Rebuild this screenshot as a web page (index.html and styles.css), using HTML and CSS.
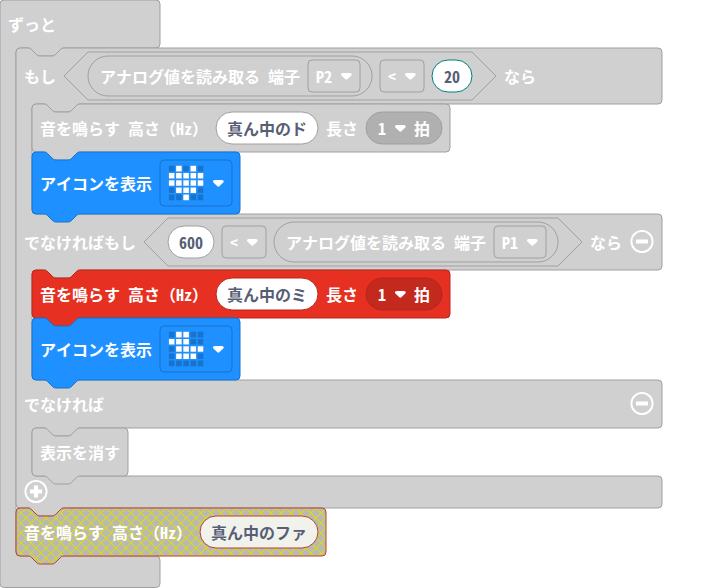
FILE: index.html
```html
<!DOCTYPE html>
<html lang="ja">
<head>
<meta charset="utf-8">
<title>ブロック</title>
<link rel="stylesheet" href="styles.css">
</head>
<body>
<svg class="defs" aria-hidden="true">
  <defs>
    <symbol id="arrow" viewBox="0 0 12.71 8.79">
      <path d="M6.36,7.79a1.43,1.43,0,0,1-1-.42L1.42,3.45a1.44,1.44,0,0,1,0-2c.56-.56,9.31-.56,9.87,0a1.44,1.44,0,0,1,0,2L7.37,7.37A1.43,1.43,0,0,1,6.36,7.79Z"/>
    </symbol>
    <symbol id="minus" viewBox="0 0 24 24">
      <circle class="ring" cx="12" cy="11.5" r="10.6"/>
      <rect x="6" y="9.4" width="12" height="4.2" rx=".4"/>
    </symbol>
    <symbol id="plus" viewBox="0 0 24 24">
      <circle class="ring" cx="12" cy="11.5" r="10.6"/>
      <path d="M9.9 5.4h4.2v4h4v4.2h-4v4h-4.2v-4h-4v-4.2h4z"/>
    </symbol>
    <pattern id="hatch" patternUnits="userSpaceOnUse" width="10" height="10">
      <rect class="hatch-base" width="10" height="10"/>
      <path class="hatch-line" d="M0 0L10 10M10 0L0 10"/>
    </pattern>
  </defs>
</svg>

<main class="block gray forever">
  <svg class="shape"><path d="M0 4a4 4 0 0 1 4-4H156a4 4 0 0 1 4 4V44a4 4 0 0 1-4 4H64c-2 0-3 1-4 2l-4 4c-1 1-2 2-4 2H40c-2 0-3-1-4-2l-4-4c-1-1-2-2-4-2H20a4 4 0 0 0-4 4V552a4 4 0 0 0 4 4H156a4 4 0 0 1 4 4V583.5a4 4 0 0 1-4 4H4a4 4 0 0 1-4-4Z"/></svg>
  <div class="row head">ずっと</div>
  <div class="body">

    <section class="block gray if">
      <svg class="shape"><path d="M0 4a4 4 0 0 1 4-4H12c2 0 3 1 4 2l4 4c1 1 2 2 4 2H36c2 0 3-1 4-2l4-4c1-1 2-2 4-2H642a4 4 0 0 1 4 4V52a4 4 0 0 1-4 4H64c-2 0-3 1-4 2l-4 4c-1 1-2 2-4 2H40c-2 0-3-1-4-2l-4-4c-1-1-2-2-4-2H20a4 4 0 0 0-4 4V162a4 4 0 0 0 4 4H642a4 4 0 0 1 4 4V218a4 4 0 0 1-4 4H64c-2 0-3 1-4 2l-4 4c-1 1-2 2-4 2H40c-2 0-3-1-4-2l-4-4c-1-1-2-2-4-2H20a4 4 0 0 0-4 4V328a4 4 0 0 0 4 4H642a4 4 0 0 1 4 4V376a4 4 0 0 1-4 4H64c-2 0-3 1-4 2l-4 4c-1 1-2 2-4 2H40c-2 0-3-1-4-2l-4-4c-1-1-2-2-4-2H20a4 4 0 0 0-4 4V424a4 4 0 0 0 4 4H642a4 4 0 0 1 4 4V456a4 4 0 0 1-4 4H48c-2 0-3 1-4 2l-4 4c-1 1-2 2-4 2H24c-2 0-3-1-4-2l-4-4c-1-1-2-2-4-2H4a4 4 0 0 1-4-4Z"/></svg>

      <div class="row branch">
        <span>もし</span>
        <div class="value hexagon">
          <svg class="shape"><path d="M24 0H408L432 24L408 48H24L0 24Z"/></svg>
          <div class="value reporter">
            <svg class="shape"><rect width="100%" height="100%" rx="20"/></svg>
            <span>アナログ値を読み取る 端子</span>
            <div class="value select"><svg class="shape"><rect width="100%" height="100%" rx="4"/></svg><span>P2</span><svg class="arrow"><use href="#arrow"/></svg></div>
          </div>
          <div class="value select"><svg class="shape"><rect width="100%" height="100%" rx="4"/></svg><span>&lt;</span><svg class="arrow"><use href="#arrow"/></svg></div>
          <div class="value input number"><svg class="shape"><rect width="100%" height="100%" rx="16"/></svg><span>20</span></div>
        </div>
        <span>なら</span>
      </div>

      <div class="body">
        <div class="block gray row tone">
          <svg class="shape"><path d="M0 4a4 4 0 0 1 4-4H12c2 0 3 1 4 2l4 4c1 1 2 2 4 2H36c2 0 3-1 4-2l4-4c1-1 2-2 4-2H414a4 4 0 0 1 4 4V44a4 4 0 0 1-4 4H48c-2 0-3 1-4 2l-4 4c-1 1-2 2-4 2H24c-2 0-3-1-4-2l-4-4c-1-1-2-2-4-2H4a4 4 0 0 1-4-4Z"/></svg>
          <span>音を鳴らす 高さ（Hz）</span>
          <div class="value input"><svg class="shape"><rect width="100%" height="100%" rx="16"/></svg><span>真ん中のド</span></div>
          <span>長さ</span>
          <div class="value beat"><svg class="shape"><rect width="100%" height="100%" rx="16"/></svg><span>1</span><svg class="arrow"><use href="#arrow"/></svg><span>拍</span></div>
        </div>
        <div class="block blue row icon">
          <svg class="shape"><path d="M0 4a4 4 0 0 1 4-4H12c2 0 3 1 4 2l4 4c1 1 2 2 4 2H36c2 0 3-1 4-2l4-4c1-1 2-2 4-2H204a4 4 0 0 1 4 4V58a4 4 0 0 1-4 4H48c-2 0-3 1-4 2l-4 4c-1 1-2 2-4 2H24c-2 0-3-1-4-2l-4-4c-1-1-2-2-4-2H4a4 4 0 0 1-4-4Z"/></svg>
          <span>アイコンを表示</span>
          <div class="value picture">
            <svg class="shape"><rect width="100%" height="100%" rx="4"/></svg>
            <svg class="leds" viewBox="0 0 36 36">
              <path class="off" d="M.9 3.6h34.4M.9 10.8h34.4M.9 18h34.4M.9 25.2h34.4M.9 32.4h34.4"/>
              <path class="on" d="M8.1 3.6h5.6M22.5 3.6h5.6M.9 10.8h34.4M.9 18h34.4M8.1 25.2h20M15.3 32.4h5.6"/>
            </svg>
            <svg class="arrow"><use href="#arrow"/></svg>
          </div>
        </div>
      </div>

      <div class="row branch">
        <span>でなければもし</span>
        <div class="value hexagon">
          <svg class="shape"><path d="M24 0H414L438 24L414 48H24L0 24Z"/></svg>
          <div class="value input"><svg class="shape"><rect width="100%" height="100%" rx="16"/></svg><span>600</span></div>
          <div class="value select"><svg class="shape"><rect width="100%" height="100%" rx="4"/></svg><span>&lt;</span><svg class="arrow"><use href="#arrow"/></svg></div>
          <div class="value reporter">
            <svg class="shape"><rect width="100%" height="100%" rx="20"/></svg>
            <span>アナログ値を読み取る 端子</span>
            <div class="value select"><svg class="shape"><rect width="100%" height="100%" rx="4"/></svg><span>P1</span><svg class="arrow"><use href="#arrow"/></svg></div>
          </div>
        </div>
        <span>なら</span>
        <svg class="button"><use href="#minus"/></svg>
      </div>

      <div class="body">
        <div class="block red row tone">
          <svg class="shape"><path d="M0 4a4 4 0 0 1 4-4H12c2 0 3 1 4 2l4 4c1 1 2 2 4 2H36c2 0 3-1 4-2l4-4c1-1 2-2 4-2H414a4 4 0 0 1 4 4V44a4 4 0 0 1-4 4H48c-2 0-3 1-4 2l-4 4c-1 1-2 2-4 2H24c-2 0-3-1-4-2l-4-4c-1-1-2-2-4-2H4a4 4 0 0 1-4-4Z"/></svg>
          <span>音を鳴らす 高さ（Hz）</span>
          <div class="value input"><svg class="shape"><rect width="100%" height="100%" rx="16"/></svg><span>真ん中のミ</span></div>
          <span>長さ</span>
          <div class="value beat"><svg class="shape"><rect width="100%" height="100%" rx="16"/></svg><span>1</span><svg class="arrow"><use href="#arrow"/></svg><span>拍</span></div>
        </div>
        <div class="block blue row icon">
          <svg class="shape"><path d="M0 4a4 4 0 0 1 4-4H12c2 0 3 1 4 2l4 4c1 1 2 2 4 2H36c2 0 3-1 4-2l4-4c1-1 2-2 4-2H204a4 4 0 0 1 4 4V58a4 4 0 0 1-4 4H48c-2 0-3 1-4 2l-4 4c-1 1-2 2-4 2H24c-2 0-3-1-4-2l-4-4c-1-1-2-2-4-2H4a4 4 0 0 1-4-4Z"/></svg>
          <span>アイコンを表示</span>
          <div class="value picture">
            <svg class="shape"><rect width="100%" height="100%" rx="4"/></svg>
            <svg class="leds" viewBox="0 0 36 36">
              <path class="off" d="M.9 3.6h34.4M.9 10.8h34.4M.9 18h34.4M.9 25.2h34.4M.9 32.4h34.4"/>
              <path class="on" d="M8.1 3.6h12.8M.9 10.8h20M8.1 18h27.2M8.1 25.2h20"/>
            </svg>
            <svg class="arrow"><use href="#arrow"/></svg>
          </div>
        </div>
      </div>

      <div class="row else">
        <span>でなければ</span>
        <svg class="button"><use href="#minus"/></svg>
      </div>

      <div class="body">
        <div class="block gray row clear">
          <svg class="shape"><path d="M0 4a4 4 0 0 1 4-4H12c2 0 3 1 4 2l4 4c1 1 2 2 4 2H36c2 0 3-1 4-2l4-4c1-1 2-2 4-2H92a4 4 0 0 1 4 4V44a4 4 0 0 1-4 4H48c-2 0-3 1-4 2l-4 4c-1 1-2 2-4 2H24c-2 0-3-1-4-2l-4-4c-1-1-2-2-4-2H4a4 4 0 0 1-4-4Z"/></svg>
          <span>表示を消す</span>
        </div>
      </div>
      <div class="row foot"><svg class="button"><use href="#plus"/></svg></div>
    </section>

    <div class="block disabled row ring-tone">
      <svg class="shape"><path d="M0 4a4 4 0 0 1 4-4H12c2 0 3 1 4 2l4 4c1 1 2 2 4 2H36c2 0 3-1 4-2l4-4c1-1 2-2 4-2H306a4 4 0 0 1 4 4V44a4 4 0 0 1-4 4H48c-2 0-3 1-4 2l-4 4c-1 1-2 2-4 2H24c-2 0-3-1-4-2l-4-4c-1-1-2-2-4-2H4a4 4 0 0 1-4-4Z"/></svg>
      <span>音を鳴らす 高さ（Hz）</span>
      <div class="value input"><svg class="shape"><rect width="100%" height="100%" rx="16"/></svg><span>真ん中のファ</span></div>
    </div>
  </div>
</main>
</body>
</html>
```
FILE: styles.css
```css
* { box-sizing: border-box; }

html, body {
  margin: 0;
  background: #fff;
  overflow: hidden;
}

body {
  height: 588px;
  color: #fff;
  font: bold 16px/24px "Noto Sans Mono CJK JP", "Noto Sans CJK JP", monospace;
  white-space: nowrap;
}

.defs {
  position: absolute;
  width: 0;
  height: 0;
}

.block {
  --fill: #d0d0d0;
  --line: #a0a0a0;
  --arg: #b0b0b0;
  position: relative;
  z-index: 0;
}

.blue { --fill: #1e90ff; --line: #1873cc; }
.red { --fill: #e63022; --line: #b8261b; --arg: #c3291d; }
.disabled { --fill: url(#hatch); --line: #b8402f; }

.shape {
  position: absolute;
  inset: 0;
  z-index: -1;
  width: 100%;
  height: 100%;
  overflow: visible;
  fill: var(--fill);
  stroke: var(--line);
  stroke-width: 1px;
}

.hatch-base { fill: #b8b8b8; }
.hatch-line { stroke: #dada1c; stroke-width: 1.1px; fill: none; }

.row {
  display: flex;
  align-items: center;
  gap: 8px;
  padding: 0 8px;
}

.body { padding-left: 16px; }

.forever { width: 160px; height: 588px; }
.head { height: 48px; }
.if { width: 646px; }
.branch { height: 56px; }
.else { height: 48px; }
.foot { height: 32px; }
.tone { width: 418px; height: 48px; }
.icon { width: 208px; height: 62px; }
.clear { width: 96px; height: 48px; }
.ring-tone { width: 310px; height: 48px; }

.value {
  position: relative;
  z-index: 0;
  display: flex;
  flex: none;
  align-items: center;
  gap: 8px;
}

.row span { flex: none; }

.hexagon { height: 48px; padding: 0 24px; }
.reporter { height: 40px; padding: 0 12px; }
.select { height: 32px; padding: 0 8px; }

.input {
  justify-content: center;
  height: 32px;
  min-width: 40px;
  padding: 0 11px;
  color: #575e75;
}

.input .shape { fill: #fff; }
.number { width: 40px; }
.number .shape { stroke: #00807d; }
.disabled .input .shape { fill: #f2f2ec; }

.beat { height: 32px; padding: 0 12px; }
.beat .shape { fill: var(--arg); }

.picture {
  justify-content: space-between;
  width: 72px;
  height: 46px;
  padding: 0 8px;
}

.leds {
  flex: none;
  width: 36px;
  height: 36px;
  fill: none;
  stroke-width: 5.6px;
  stroke-dasharray: 5.6 1.6;
}

.off { stroke: #1873cc; }
.on { stroke: #fff; }

.arrow {
  flex: none;
  width: 12.7px;
  height: 8.8px;
  margin: 0 -.35px;
  fill: #fff;
}

.button {
  flex: none;
  width: 24px;
  height: 24px;
  margin-left: auto;
  fill: #fff;
}

.foot .button { margin-left: 0; }
.ring { fill: none; stroke: #fff; stroke-width: 1.9px; }
```
